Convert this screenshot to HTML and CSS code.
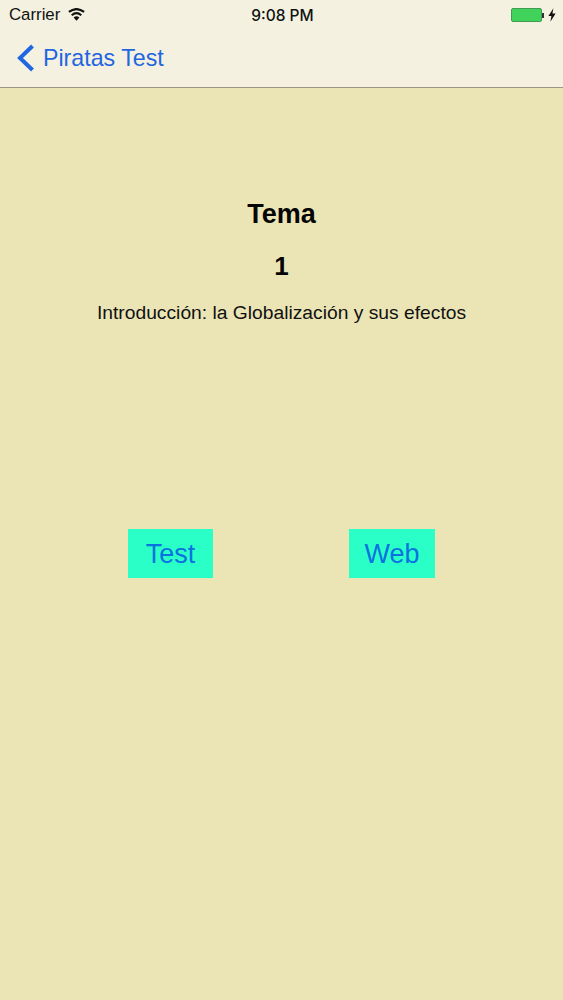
FILE: index.html
```html
<!DOCTYPE html>
<html>

<head>
	<meta charset="utf-8">
	<title>Piratas Test</title>
	<link rel="stylesheet" href="styles.css">
</head>

<body>
	<div class="header">
		<div class="statusbar">
			<div class="status_left">
				<span class="carrier">Carrier</span>
				<svg class="wifi" width="17" height="13" viewBox="0 0 17 13">
					<path d="M8.5 12.8 L5.6 9.4 Q8.5 7.2 11.4 9.4 Z" fill="#111"/>
					<path d="M3.7 7.2 Q8.5 3.2 13.3 7.2" fill="none" stroke="#111" stroke-width="2.1"/>
					<path d="M0.9 3.9 Q8.5 -1.8 16.1 3.9" fill="none" stroke="#111" stroke-width="2.1"/>
				</svg>
			</div>
			<div class="clock">9:08 PM</div>
			<div class="status_right">
				<div class="battery"><div class="battery_fill"></div></div>
				<div class="battery_tip"></div>
				<svg class="bolt" width="8" height="14" viewBox="0 0 8 14">
					<path d="M5.4 0.3 L0.4 8 L3.4 8 L2.4 13.7 L7.6 5.6 L4.4 5.6 Z" fill="#111"/>
				</svg>
			</div>
		</div>
		<div class="navbar">
			<svg class="chevron" width="20" height="30" viewBox="0 0 20 30">
				<path d="M16.5 3 L4 15 L16.5 27" fill="none" stroke="#1f66e0" stroke-width="4"/>
			</svg>
			<span class="back_title">Piratas Test</span>
		</div>
	</div>
	<div class="content">
		<div class="tema">Tema</div>
		<div class="numero">1</div>
		<div class="descripcion">Introducción: la Globalización y sus efectos</div>
		<div class="buttons">
			<div class="btn btn_test"><span class="btn_label">Test</span></div>
			<div class="btn btn_web"><span class="btn_label">Web</span></div>
		</div>
	</div>
</body>

</html>
```

FILE: styles.css
```css
body {
	margin: 0;
	padding: 0;
	width: 563px;
	height: 1000px;
	overflow: hidden;
	background: #ebe5b5;
	font-family: "Liberation Sans", Arial, sans-serif;
	color: #111;
}
.header {
	height: 87px;
	background: #f4f1e0;
	border-bottom: 1px solid #9c9785;
}
.statusbar {
	height: 30px;
	display: grid;
	grid-template-columns: 1fr auto 1fr;
	align-items: center;
	padding: 0 7px 0 9px;
	font-size: 16.8px;
}
.status_left {
	display: flex;
	align-items: center;
	gap: 7px;
}
.wifi {
	margin-top: -2px;
}
.carrier {
	width: 52px;
}
.clock {
	font-family: Inter, "Liberation Sans", sans-serif;
	font-weight: 500;
	font-size: 15.5px;
}
.status_right {
	display: flex;
	align-items: center;
	justify-content: flex-end;
}
.battery {
	width: 29px;
	height: 12px;
	border: 1px solid #3f9c52;
	border-radius: 2px;
	background: #41d25c;
}
.battery_tip {
	width: 2px;
	height: 5px;
	background: #333;
	margin-right: 4px;
}
.navbar {
	height: 56px;
	display: flex;
	align-items: center;
	padding-left: 16px;
}
.chevron {
	margin-right: 7px;
}
.back_title {
	font-size: 23.2px;
	color: #1f66e0;
}
.content {
	display: flex;
	flex-direction: column;
	align-items: center;
}
.tema {
	margin-top: 111px;
	font-size: 27px;
	font-weight: bold;
	color: #050505;
	line-height: 30px;
}
.numero {
	margin-top: 22px;
	font-size: 26px;
	font-weight: bold;
	color: #050505;
	line-height: 30px;
}
.descripcion {
	margin-top: 20px;
	font-size: 19.25px;
	line-height: 24px;
}
.buttons {
	margin-top: 204px;
	display: flex;
	gap: 136px;
}
.btn {
	height: 49px;
	padding-top: 2px;
	box-sizing: border-box;
	display: flex;
	align-items: center;
	justify-content: center;
	background: #2bffc8;
	color: #0a72e0;
	font-size: 27px;
}
.btn_test {
	width: 85px;
}
.btn_web {
	width: 86px;
}
```
